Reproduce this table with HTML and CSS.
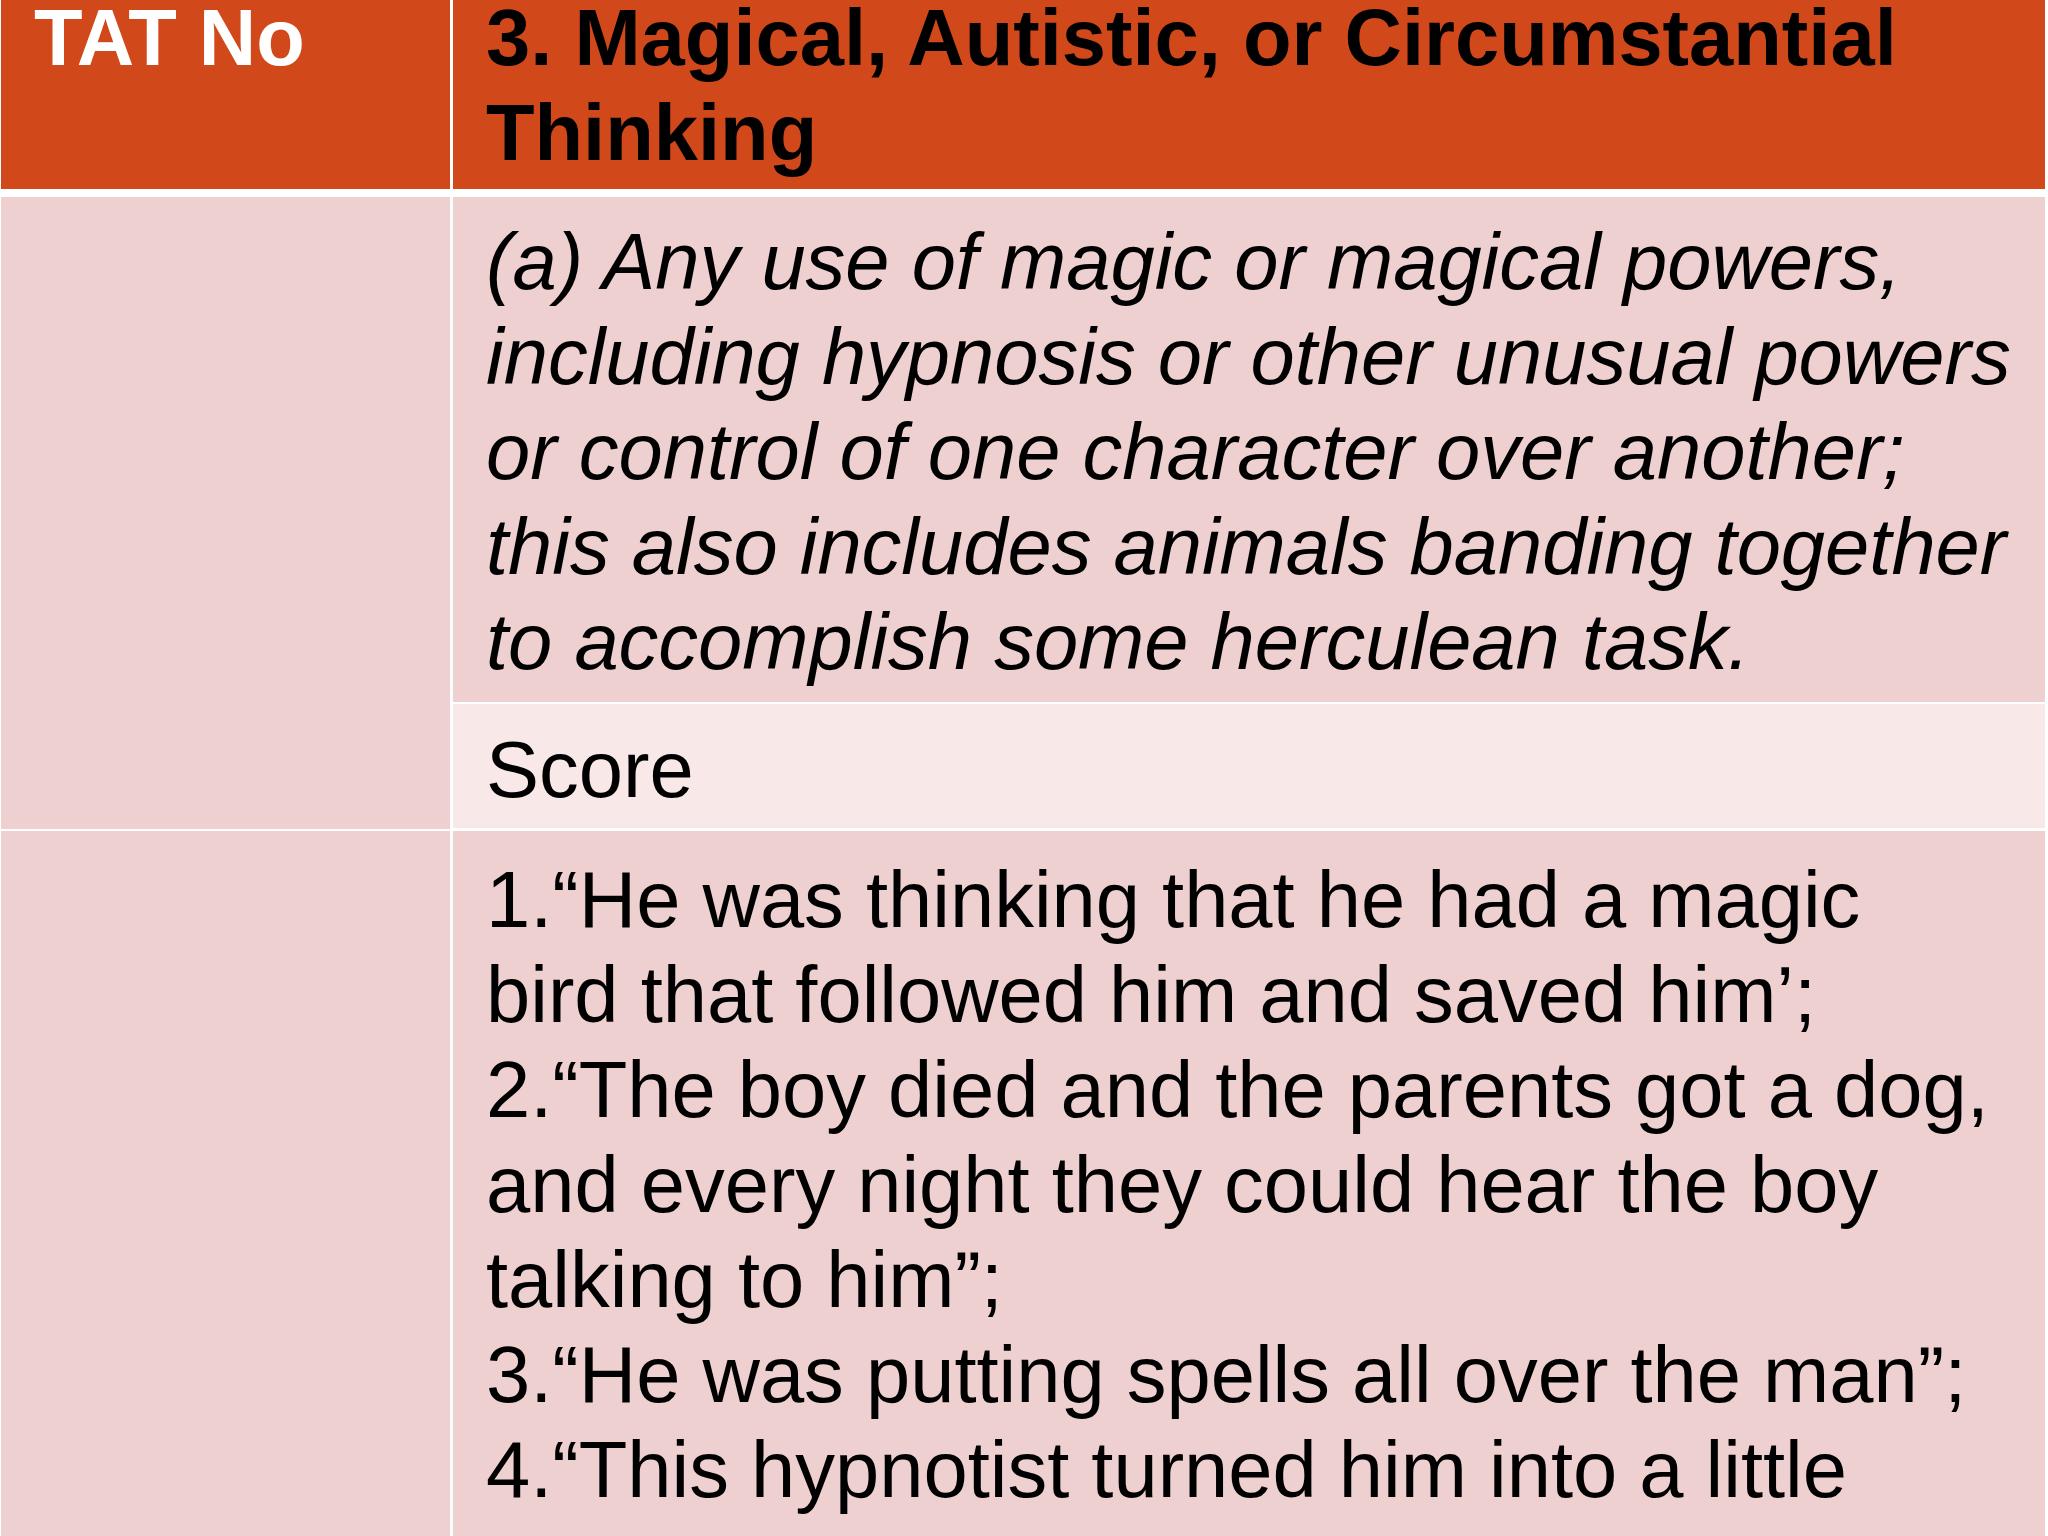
FILE: index.html
```html
<!DOCTYPE html>
<html lang="en">
<head>
<meta charset="utf-8">
<title>TAT No – Magical, Autistic, or Circumstantial Thinking</title>
<link rel="stylesheet" href="styles.css">
</head>
<body>
<div class="table">
  <div class="cell head head-left">TAT No</div>
  <div class="cell head head-right">3. Magical, Autistic, or Circumstantial<br>Thinking</div>

  <div class="cell side side-top"></div>
  <div class="cell body italic">(a) Any use of magic or magical powers,<br>including hypnosis or other unusual powers<br>or control of one character over another;<br>this also includes animals banding together<br>to accomplish some herculean task.</div>
  <div class="cell body score">Score</div>

  <div class="cell side"></div>
  <div class="cell body list">1.“He was thinking that he had a magic<br>bird that followed him and saved him’;<br>2.“The boy died and the parents got a dog,<br>and every night they could hear the boy<br>talking to him”;<br>3.“He was putting spells all over the man”;<br>4.“This hypnotist turned him into a little</div>
</div>
</body>
</html>
```

FILE: styles.css
```css
html, body {
  margin: 0;
  padding: 0;
  background: #ffffff;
  height: 1536px;
  overflow: hidden;
}

.table {
  display: grid;
  grid-template-columns: 449px 1592px;
  grid-template-rows: auto auto auto 1fr;
  column-gap: 3px;
  row-gap: 2px;
  margin: -25px 0 0 1px;
  min-height: 1620px;
  font-family: "Liberation Sans", Arial, sans-serif;
  font-size: 79.5px;
  line-height: 95px;
  color: #000000;
}

.cell {
  padding: 0 32px 0 33px;
  white-space: nowrap;
}

.head {
  background: #d1481a;
  font-weight: bold;
  padding-top: 15px;
  padding-bottom: 9px;
  margin-bottom: 6px;
}

.head-left {
  color: #ffffff;
}

.head-right {
  color: #000000;
}

.side {
  background: #efd0d0;
}

.side-top {
  grid-row: span 2;
}

.body {
  background: #efd0d0;
}

.italic {
  font-style: italic;
  padding-top: 17px;
  padding-bottom: 13px;
}

.score {
  grid-column: 2;
  background: #f8e8e8;
  padding-top: 18px;
  padding-bottom: 11px;
  margin-bottom: 1px;
}

.list {
  padding-top: 21px;
}
```
